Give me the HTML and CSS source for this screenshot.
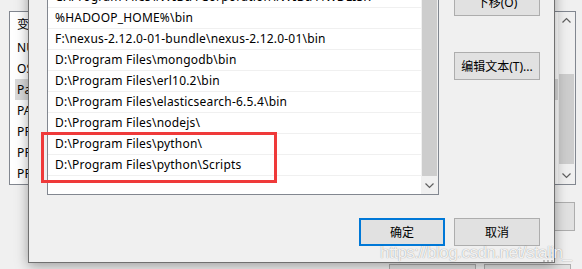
FILE: index.html
```html
<!DOCTYPE html>
<html lang="zh-CN">
<head>
<meta charset="UTF-8">
<meta name="viewport" content="width=device-width, initial-scale=1.0">
<title>编辑环境变量</title>
<link rel="stylesheet" href="styles.css">
</head>
<body>
<div class="screen">

    <!-- parent window: 环境变量 -->
    <div class="parent">
        <div class="var-list">
            <div class="var-rows">
                <div class="var-head">变量</div>
                <div class="var-row">NUMBER_OF_PROCESSORS</div>
                <div class="var-row">OS</div>
                <div class="var-row selected">Path</div>
                <div class="var-row">PATHEXT</div>
                <div class="var-row">PROCESSOR_ARCHITECTURE</div>
                <div class="var-row">PROCESSOR_IDENTIFIER</div>
                <div class="var-row">PROCESSOR_LEVEL</div>
            </div>
            <div class="vscroll">
                <div class="sb-arrow">
                    <svg width="17" height="17" viewBox="0 0 17 17"><polyline points="4.5,10.5 8.5,6.5 12.5,10.5" fill="none" stroke="#606060" stroke-width="1.2"/></svg>
                </div>
                <div class="sb-track"><div class="sb-thumb parent-thumb"></div></div>
                <div class="sb-arrow">
                    <svg width="17" height="17" viewBox="0 0 17 17"><polyline points="4.5,6.5 8.5,10.5 12.5,6.5" fill="none" stroke="#606060" stroke-width="1.2"/></svg>
                </div>
            </div>
        </div>
        <div class="parent-actions">
            <div class="btn parent-btn">删除(D)</div>
        </div>
        <div class="parent-sep"></div>
        <div class="parent-footer">
            <div class="btn parent-btn">确定</div>
            <div class="btn parent-btn">取消</div>
        </div>
    </div>

    <!-- dialog: 编辑环境变量 -->
    <div class="dialog">
        <div class="dlg-main">
            <div class="path-list">
                <div class="path-rows">
                    <div class="path-row">%SystemRoot%\System32\Wbem</div>
                    <div class="path-row">C:\Program Files\NVIDIA Corporation\NVIDIA NvDLISR</div>
                    <div class="path-row">%HADOOP_HOME%\bin</div>
                    <div class="path-row">F:\nexus-2.12.0-01-bundle\nexus-2.12.0-01\bin</div>
                    <div class="path-row">D:\Program Files\mongodb\bin</div>
                    <div class="path-row">D:\Program Files\erl10.2\bin</div>
                    <div class="path-row">D:\Program Files\elasticsearch-6.5.4\bin</div>
                    <div class="path-row">D:\Program Files\nodejs\</div>
                    <div class="path-row">D:\Program Files\python\</div>
                    <div class="path-row">D:\Program Files\python\Scripts</div>
                    <div class="path-row"></div>
                </div>
                <div class="vscroll">
                    <div class="sb-arrow">
                        <svg width="17" height="17" viewBox="0 0 17 17"><polyline points="4.5,10.5 8.5,6.5 12.5,10.5" fill="none" stroke="#606060" stroke-width="1.2"/></svg>
                    </div>
                    <div class="sb-track"><div class="sb-thumb path-thumb"></div></div>
                    <div class="sb-arrow">
                        <svg width="17" height="17" viewBox="0 0 17 17"><polyline points="4.5,6.5 8.5,10.5 12.5,6.5" fill="none" stroke="#606060" stroke-width="1.2"/></svg>
                    </div>
                </div>
            </div>
            <div class="side-buttons">
                <div class="btn move-down">下移(O)</div>
                <div class="btn edit-text">编辑文本(T)...</div>
            </div>
        </div>
        <div class="dlg-footer">
            <div class="btn default">确定</div>
            <div class="btn">取消</div>
        </div>
        <svg class="grip" width="10" height="10" viewBox="0 0 10 10">
            <rect x="8" y="0" width="2" height="2" fill="#bcbcbc"/>
            <rect x="4" y="4" width="2" height="2" fill="#bcbcbc"/>
            <rect x="8" y="4" width="2" height="2" fill="#bcbcbc"/>
            <rect x="0" y="8" width="2" height="2" fill="#bcbcbc"/>
            <rect x="4" y="8" width="2" height="2" fill="#bcbcbc"/>
            <rect x="8" y="8" width="2" height="2" fill="#bcbcbc"/>
        </svg>
    </div>

    <!-- annotation + watermark -->
    <div class="mark"></div>
    <div class="watermark">https://blog.csdn.net/stalin_</div>
</div>
</body>
</html>
```

FILE: styles.css
```css
* {
    box-sizing: border-box;
}
body {
    margin: 0;
    width: 582px;
    height: 269px;
    overflow: hidden;
    background: #f0f0f0;
    font-family: "Noto Sans", "Noto Sans CJK SC", sans-serif;
    font-size: 12px;
    color: #000;
}
.screen {
    position: relative;
    width: 582px;
    height: 269px;
    overflow: hidden;
}

/* shared bits */
.btn {
    height: 28px;
    border: 1px solid #adadad;
    background: #e1e1e1;
    display: flex;
    align-items: center;
    justify-content: center;
    white-space: nowrap;
}
.btn.default {
    border: 2px solid #0078d7;
}
.vscroll {
    width: 17px;
    background: #f0f0f0;
    display: flex;
    flex-direction: column;
}
.sb-arrow {
    height: 17px;
    display: flex;
}
.sb-track {
    flex: 1;
    display: flex;
    flex-direction: column;
}
.sb-thumb {
    background: #cdcdcd;
    margin: 0 1px;
}

/* parent window */
.parent {
    height: 269px;
    padding: 11px 6px 0 9px;
    display: flex;
    flex-direction: column;
}
.var-list {
    height: 176px;
    border: 1px solid #828790;
    background: #fff;
    display: flex;
}
.var-rows {
    flex: 1;
    overflow: hidden;
    letter-spacing: 0.2px;
}
.var-head {
    height: 25px;
    line-height: 25px;
    padding-left: 7px;
}
.var-row {
    height: 21px;
    line-height: 21px;
    margin-left: 5px;
    padding-left: 2px;
    white-space: nowrap;
}
.var-row.selected {
    background: #d9d9d9;
}
.parent-thumb {
    margin-top: 45px;
    height: 90px;
}
.parent-actions {
    margin-top: 17px;
    display: flex;
    justify-content: flex-end;
    padding-right: 1px;
}
.parent-btn {
    width: 87px;
    height: 29px;
}
.parent-sep {
    margin-top: 15px;
    height: 1px;
    background: #dadada;
}
.parent-footer {
    margin-top: 18px;
    display: flex;
    justify-content: flex-end;
    gap: 8px;
    padding-right: 5px;
}

/* dialog window */
.dialog {
    position: absolute;
    left: 28px;
    top: -41px;
    width: 527px;
    height: 304px;
    border: 1px solid #707070;
    background: #f0f0f0;
    box-shadow: 0 3px 12px rgba(0, 0, 0, 0.35);
    padding: 5px 14px 16px 18px;
    display: flex;
    flex-direction: column;
    z-index: 1;
}
.dlg-main {
    display: flex;
    gap: 15px;
}
.path-list {
    width: 392px;
    height: 230px;
    border: 1px solid #828790;
    background: #fff;
    display: flex;
}
.path-rows {
    flex: 1;
    overflow: hidden;
    letter-spacing: 0.2px;
}
.path-row {
    height: 21px;
    line-height: 20px;
    border-bottom: 1px solid #f0f0f0;
    padding-left: 7px;
    white-space: nowrap;
}
.path-thumb {
    flex: 1;
    margin-bottom: 1px;
}
.side-buttons {
    width: 86px;
    display: flex;
    flex-direction: column;
}
.move-down {
    margin-top: 23px;
}
.edit-text {
    margin-top: 36px;
}
.dlg-footer {
    margin-top: 23px;
    display: flex;
    justify-content: flex-end;
    gap: 9px;
}
.dlg-footer .btn {
    width: 86px;
}
.grip {
    position: absolute;
    right: 1px;
    bottom: 0;
}

/* red annotation box */
.mark {
    position: absolute;
    left: 41px;
    top: 132px;
    width: 236px;
    height: 51px;
    border: 3px solid #ef3a3a;
    z-index: 2;
}
.watermark {
    position: absolute;
    left: 380px;
    top: 244px;
    font-family: "Liberation Sans", sans-serif;
    font-size: 17px;
    line-height: 17px;
    letter-spacing: -0.5px;
    color: rgba(255, 255, 255, 0.9);
    text-shadow: 0 0 1px rgba(0, 0, 0, 0.45);
    white-space: nowrap;
    z-index: 3;
}
```
